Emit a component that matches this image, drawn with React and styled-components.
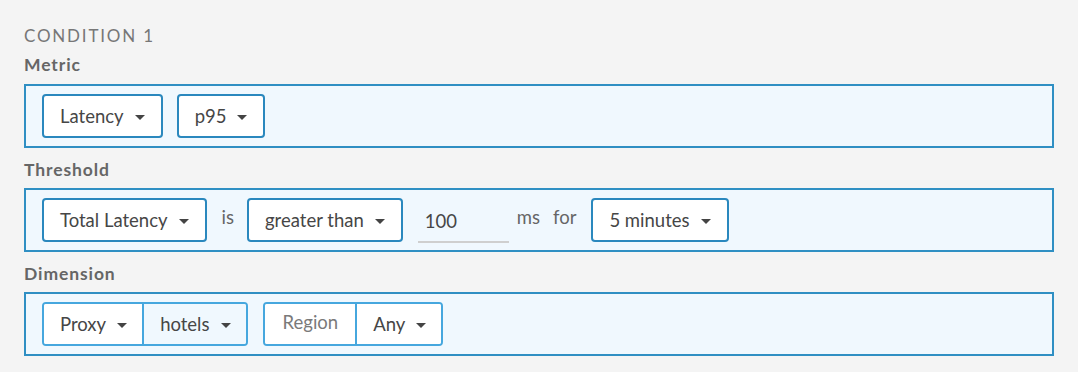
import React from 'react'
import styled, { createGlobalStyle } from 'styled-components'

const GlobalStyle = createGlobalStyle`
  body {
    margin: 0;
    background: #f4f4f4;
    font-family: Lato, 'Open Sans', sans-serif;
  }
`

const Section = styled.div`
  padding: 26px 24px 0;
`

const Heading = styled.div`
  font-size: 17px;
  line-height: 20px;
  letter-spacing: 1.8px;
  color: #777;
  margin-bottom: 9px;
`

const Label = styled.div`
  font-size: 17.5px;
  line-height: 20px;
  letter-spacing: 0.9px;
  font-weight: bold;
  color: #666;
  margin: ${(p) => p.top || 0}px 0 ${(p) => p.gap || 8}px;
`

const Panel = styled.div`
  display: flex;
  align-items: center;
  gap: ${(p) => p.gap || 14}px;
  height: 64px;
  box-sizing: border-box;
  padding: 0 16px;
  background: #f0f8fe;
  border: 2px solid #2f8fc3;
  margin-bottom: 12px;
`

const Caret = styled.span`
  display: inline-block;
  width: 0;
  height: 0;
  margin-left: ${(p) => p.m || 11}px;
  border-left: 5px solid transparent;
  border-right: 5px solid transparent;
  border-top: 5px solid #444;
  transform: translateY(1px);
`

const Dropdown = styled.div`
  display: flex;
  align-items: center;
  height: 44px;
  box-sizing: border-box;
  padding: 0 16px;
  background: #fff;
  border: 2px solid #2a88be;
  border-radius: 4px;
  font-size: 18.5px;
  color: #464646;
`

const Word = styled.span`
  font-size: 18.5px;
  color: #666;
  margin: ${(p) => p.m || '0'};
  transform: translateY(-3px);
`

const NumberInput = styled.div`
  width: 91px;
  height: 42px;
  box-sizing: border-box;
  padding: 0 7px;
  display: flex;
  align-items: center;
  border-bottom: 2px solid #cfcfcf;
  font-size: 18.5px;
  color: #464646;
  margin-top: 4px;
`

const Group = styled.div`
  display: flex;
  height: 44px;
  box-sizing: border-box;
  border: 2px solid #46a7de;
  border-radius: 4px;
  overflow: hidden;
`

const Segment = styled.div`
  display: flex;
  align-items: center;
  padding: ${(p) => (p.muted ? '0 17px 0 18px' : '0 15px 0 16px')};
  background: ${(p) => (p.tint ? '#f0f8fe' : '#fff')};
  border-left: ${(p) => (p.first ? 'none' : '2px solid #46a7de')};
  font-size: 18.5px;
  color: ${(p) => (p.muted ? '#7a7a7a' : '#464646')};
`

const Muted = styled.span`
  transform: translateY(-2px);
`

export default function App() {
  return (
    <Section>
      <GlobalStyle />
      <Heading>CONDITION 1</Heading>
      <Label gap={9}>Metric</Label>
      <Panel>
        <Dropdown>
          Latency <Caret />
        </Dropdown>
        <Dropdown>
          p95 <Caret />
        </Dropdown>
      </Panel>
      <Label>Threshold</Label>
      <Panel gap={15}>
        <Dropdown>
          Total Latency <Caret />
        </Dropdown>
        <Word m="0 -2px 0 0">is</Word>
        <Dropdown>
          greater than <Caret />
        </Dropdown>
        <NumberInput>100</NumberInput>
        <Word m="0 -2px 0 -7px">ms</Word>
        <Word>for</Word>
        <Dropdown>
          5 minutes <Caret />
        </Dropdown>
      </Panel>
      <Label top={2} gap={8}>
        Dimension
      </Label>
      <Panel gap={15}>
        <Group>
          <Segment first>
            Proxy <Caret />
          </Segment>
          <Segment tint>
            hotels <Caret />
          </Segment>
        </Group>
        <Group>
          <Segment first muted>
            <Muted>Region</Muted>
          </Segment>
          <Segment>
            Any <Caret />
          </Segment>
        </Group>
      </Panel>
    </Section>
  )
}
